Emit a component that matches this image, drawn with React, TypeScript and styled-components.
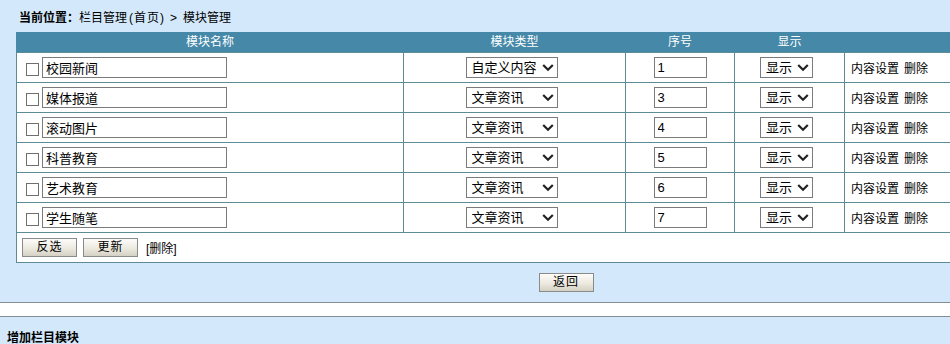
import React from "react";
import styled, { createGlobalStyle } from "styled-components";

const GlobalStyle = createGlobalStyle`
  html, body { margin: 0; padding: 0; background: #ffffff; overflow: hidden; }
  body { font-family: "Liberation Sans", "Noto Sans CJK SC", sans-serif; font-size: 12px; color: #000; }
  * { box-sizing: border-box; }
`;

const Page = styled.div`
  width: 1132px;
`;

const Panel = styled.div`
  background: #d3e8fa;
  padding-top: 8px;
  border-bottom: 1px solid #848d94;
`;

const Crumb = styled.div`
  height: 20px;
  line-height: 20px;
  padding-left: 19px;
  margin-bottom: 4px;
  font-size: 12px;
  b { font-weight: bold; }
`;

const Paren = styled.span`
  margin: 0 1px 0 2px;
  letter-spacing: 1px;
`;

const Arrow = styled.span`
  margin: 0 6px 0 4px;
`;

const Grid = styled.table`
  margin-left: 16px;
  width: 1100px;
  border-collapse: collapse;
  table-layout: fixed;
  background: #ffffff;
`;

const HeadCell = styled.th<{ $w?: number }>`
  width: ${(p) => (p.$w ? `${p.$w}px` : "auto")};
  height: 20px;
  padding: 0;
  background: #4588a8;
  color: #ffffff;
  font-weight: normal;
  font-size: 12px;
  line-height: 19px;
  text-align: center;
  border: 1px solid #4588a8;
  border-bottom: 1px solid #5d8b96;
`;

const Cell = styled.td<{ $align?: string }>`
  height: 30px;
  padding: 0 0 0 ${(p) => (p.$align === "center" ? "0" : "5px")};
  text-align: ${(p) => p.$align || "left"};
  vertical-align: middle;
  border: 1px solid #5d8b96;
  font-size: 12px;
`;

const NameBox = styled.div`
  display: flex;
  align-items: flex-end;
  gap: 3px;
  padding-left: 4px;
`;

const Check = styled.input.attrs({ type: "checkbox" })`
  appearance: none;
  -webkit-appearance: none;
  width: 13px;
  height: 13px;
  margin: 0 0 2px 0;
  border: 1px solid #6f6f6f;
  background: #ffffff;
  border-radius: 0;
`;

const TextBox = styled.input<{ $w: number }>`
  width: ${(p) => p.$w}px;
  height: 21px;
  border: 1px solid #7b7b7b;
  padding: 0 3px;
  font-family: "Liberation Sans", "Noto Sans CJK SC", sans-serif;
  font-size: 13px;
  line-height: 19px;
  color: #000;
  background: #fff;
  outline: none;
  vertical-align: middle;
`;

const SelectWrap = styled.span<{ $w: number; $shift: number }>`
  position: relative;
  display: inline-block;
  width: ${(p) => p.$w}px;
  height: 21px;
  margin-left: ${(p) => p.$shift}px;
  vertical-align: middle;
  svg {
    position: absolute;
    right: 4px;
    top: 6px;
    pointer-events: none;
  }
`;

const Select = styled.select`
  appearance: none;
  -webkit-appearance: none;
  width: 100%;
  height: 21px;
  border: 1px solid #7b7b7b;
  border-radius: 0;
  padding: 0 0 0 5px;
  background: #fff;
  font-family: "Liberation Sans", "Noto Sans CJK SC", sans-serif;
  font-size: 13px;
  line-height: 19px;
  color: #000;
  text-align: left;
  outline: none;
`;

const Actions = styled.span`
  display: inline-flex;
  gap: 5px;
  padding-left: 1px;
`;

const Btn = styled.button`
  width: 55px;
  height: 19px;
  padding: 0;
  border: 1px solid #8a8a8a;
  background: linear-gradient(to bottom, #fdfcfa 0%, #ece9df 55%, #d4d0c4 100%);
  font-family: "Liberation Sans", "Noto Sans CJK SC", sans-serif;
  font-size: 12px;
  line-height: 17px;
  letter-spacing: 1px;
  color: #000;
  vertical-align: middle;
`;

const BtnRow = styled.div`
  display: flex;
  align-items: center;
  gap: 6px;
`;

const DelText = styled.span`
  margin-left: 2px;
`;

const ReturnBar = styled.div`
  height: 39px;
  display: flex;
  justify-content: center;
  align-items: center;
`;

const Gap = styled.div`
  height: 13px;
  background: #ffffff;
`;

const AddPanel = styled.div`
  background: #d3e8fa;
  border-top: 1px solid #848d94;
  padding: 11px 0 0 7px;
  height: 60px;
  font-weight: bold;
  font-size: 12px;
  line-height: 20px;
`;

const Chevron = () => (
  <svg width="12" height="9" viewBox="0 0 12 9">
    <path d="M1.2 2 L6 6.8 L10.8 2" fill="none" stroke="#222" strokeWidth="2.2" />
  </svg>
);

const rows = [
  { name: "校园新闻", type: "自定义内容", order: "1" },
  { name: "媒体报道", type: "文章资讯", order: "3" },
  { name: "滚动图片", type: "文章资讯", order: "4" },
  { name: "科普教育", type: "文章资讯", order: "5" },
  { name: "艺术教育", type: "文章资讯", order: "6" },
  { name: "学生随笔", type: "文章资讯", order: "7" },
];

export default function App() {
  return (
    <Page>
      <GlobalStyle />
      <Panel>
        <Crumb>
          <b>当前位置：</b>栏目管理<Paren>(首页)</Paren>
          <Arrow>&gt;</Arrow>模块管理
        </Crumb>
        <Grid>
          <thead>
            <tr>
              <HeadCell $w={387}>模块名称</HeadCell>
              <HeadCell $w={222}>模块类型</HeadCell>
              <HeadCell $w={109}>序号</HeadCell>
              <HeadCell $w={110}>显示</HeadCell>
              <HeadCell></HeadCell>
            </tr>
          </thead>
          <tbody>
            {rows.map((r) => (
              <tr key={r.name}>
                <Cell>
                  <NameBox>
                    <Check />
                    <TextBox $w={185} defaultValue={r.name} />
                  </NameBox>
                </Cell>
                <Cell $align="center">
                  <SelectWrap $w={92} $shift={-6}>
                    <Select defaultValue={r.type}>
                      <option>自定义内容</option>
                      <option>文章资讯</option>
                    </Select>
                    <Chevron />
                  </SelectWrap>
                </Cell>
                <Cell $align="center">
                  <TextBox $w={53} defaultValue={r.order} />
                </Cell>
                <Cell $align="center">
                  <SelectWrap $w={53} $shift={-6}>
                    <Select defaultValue="显示">
                      <option>显示</option>
                      <option>隐藏</option>
                    </Select>
                    <Chevron />
                  </SelectWrap>
                </Cell>
                <Cell>
                  <Actions>
                    <span>内容设置</span>
                    <span>删除</span>
                  </Actions>
                </Cell>
              </tr>
            ))}
            <tr>
              <Cell colSpan={5}>
                <BtnRow>
                  <Btn>反选</Btn>
                  <Btn>更新</Btn>
                  <DelText>[删除]</DelText>
                </BtnRow>
              </Cell>
            </tr>
          </tbody>
        </Grid>
        <ReturnBar>
          <Btn>返回</Btn>
        </ReturnBar>
      </Panel>
      <Gap />
      <AddPanel>增加栏目模块</AddPanel>
    </Page>
  );
}
